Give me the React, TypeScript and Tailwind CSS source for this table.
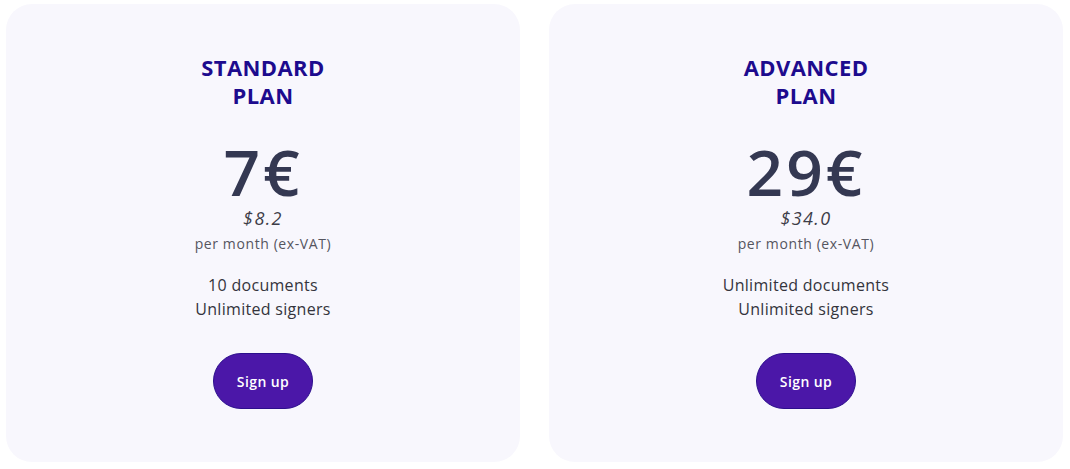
const plans = [
  { name: "STANDARD", price: "7€", usd: "$8.2", docs: "10 documents" },
  { name: "ADVANCED", price: "29€", usd: "$34.0", docs: "Unlimited documents" },
];

function PlanCard({ plan }: { plan: (typeof plans)[number] }) {
  return (
    <div className="flex h-[458px] w-[514px] flex-col items-center rounded-[26px] bg-[#f8f7fd] pt-[49px] text-center">
      {/* Title */}
      <h2 className="text-[22px] font-bold leading-[28px] tracking-[0.4px] text-[#1d0b8e]">
        {plan.name}
        <br />
        PLAN
      </h2>

      {/* Price */}
      <div className="mt-[32px] text-[64px] font-semibold leading-[62px] tracking-[3px] text-[#343852]">
        {plan.price}
      </div>
      <div className="mt-[3px] text-[18px] italic leading-[24px] tracking-[1.4px] text-[#3d3d48]">
        {plan.usd}
      </div>
      <div className="mt-[4px] text-[14px] leading-[20px] tracking-[0.6px] text-[#55555f]">
        per month (ex-VAT)
      </div>

      {/* Features */}
      <div className="mt-[19px] text-[16px] leading-[24px] tracking-[0.3px] text-[#34343c]">
        <div>{plan.docs}</div>
        <div>Unlimited signers</div>
      </div>

      <button className="mt-[32px] h-[56px] w-[100px] rounded-full border border-[#2c0f8c] bg-[#4b17a8] text-[14px] font-semibold tracking-[0.4px] text-white">
        Sign up
      </button>
    </div>
  );
}

export default function App() {
  return (
    <div className="min-h-screen bg-white pl-[6px] pt-[4px] font-['Open_Sans',sans-serif]">
      <div className="flex gap-[29px]">
        {plans.map((p) => (
          <PlanCard key={p.name} plan={p} />
        ))}
      </div>
    </div>
  );
}
